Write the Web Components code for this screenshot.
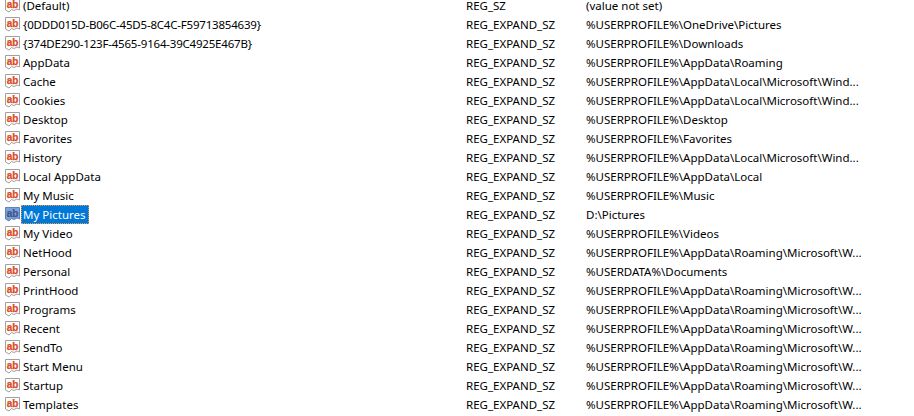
<!DOCTYPE html>
<html>
<head>
<meta charset="utf-8">
<title>Registry values</title>
<style>
  html, body { margin: 0; padding: 0; background: #fff; overflow: hidden; height: 416px; }
</style>
</head>
<body>
<reg-list>
  <reg-row name="(Default)" type="REG_SZ" data="(value not set)"></reg-row>
  <reg-row name="{0DDD015D-B06C-45D5-8C4C-F59713854639}" type="REG_EXPAND_SZ" data="%USERPROFILE%\OneDrive\Pictures"></reg-row>
  <reg-row name="{374DE290-123F-4565-9164-39C4925E467B}" type="REG_EXPAND_SZ" data="%USERPROFILE%\Downloads"></reg-row>
  <reg-row name="AppData" type="REG_EXPAND_SZ" data="%USERPROFILE%\AppData\Roaming"></reg-row>
  <reg-row name="Cache" type="REG_EXPAND_SZ" data="%USERPROFILE%\AppData\Local\Microsoft\Wind..."></reg-row>
  <reg-row name="Cookies" type="REG_EXPAND_SZ" data="%USERPROFILE%\AppData\Local\Microsoft\Wind..."></reg-row>
  <reg-row name="Desktop" type="REG_EXPAND_SZ" data="%USERPROFILE%\Desktop"></reg-row>
  <reg-row name="Favorites" type="REG_EXPAND_SZ" data="%USERPROFILE%\Favorites"></reg-row>
  <reg-row name="History" type="REG_EXPAND_SZ" data="%USERPROFILE%\AppData\Local\Microsoft\Wind..."></reg-row>
  <reg-row name="Local AppData" type="REG_EXPAND_SZ" data="%USERPROFILE%\AppData\Local"></reg-row>
  <reg-row name="My Music" type="REG_EXPAND_SZ" data="%USERPROFILE%\Music"></reg-row>
  <reg-row name="My Pictures" type="REG_EXPAND_SZ" data="D:\Pictures" selected></reg-row>
  <reg-row name="My Video" type="REG_EXPAND_SZ" data="%USERPROFILE%\Videos"></reg-row>
  <reg-row name="NetHood" type="REG_EXPAND_SZ" data="%USERPROFILE%\AppData\Roaming\Microsoft\W..."></reg-row>
  <reg-row name="Personal" type="REG_EXPAND_SZ" data="%USERDATA%\Documents"></reg-row>
  <reg-row name="PrintHood" type="REG_EXPAND_SZ" data="%USERPROFILE%\AppData\Roaming\Microsoft\W..."></reg-row>
  <reg-row name="Programs" type="REG_EXPAND_SZ" data="%USERPROFILE%\AppData\Roaming\Microsoft\W..."></reg-row>
  <reg-row name="Recent" type="REG_EXPAND_SZ" data="%USERPROFILE%\AppData\Roaming\Microsoft\W..."></reg-row>
  <reg-row name="SendTo" type="REG_EXPAND_SZ" data="%USERPROFILE%\AppData\Roaming\Microsoft\W..."></reg-row>
  <reg-row name="Start Menu" type="REG_EXPAND_SZ" data="%USERPROFILE%\AppData\Roaming\Microsoft\W..."></reg-row>
  <reg-row name="Startup" type="REG_EXPAND_SZ" data="%USERPROFILE%\AppData\Roaming\Microsoft\W..."></reg-row>
  <reg-row name="Templates" type="REG_EXPAND_SZ" data="%USERPROFILE%\AppData\Roaming\Microsoft\W..."></reg-row>
</reg-list>
<script>
class RegIcon extends HTMLElement {
  constructor() {
    super();
    this.attachShadow({ mode: 'open' });
  }

  connectedCallback() {
    const selected = this.hasAttribute('selected');
    // selected rows get the blue tint windows puts over list icons
    const page = selected ? '#7ba3dc' : '#ffffff';
    const edge = selected ? '#5f82b8' : '#a0a0a0';
    const ink = selected ? '#46548a' : '#dc4a26';

    this.shadowRoot.innerHTML = `
      <style>
        :host { display: block; width: 17px; height: 17px; }
        svg { display: block; }
        text { font-family: "Liberation Sans", sans-serif; font-size: 10px; font-weight: bold; }
      </style>
      <svg width="17" height="17" viewBox="0 0 17 17">
        <path d="M1.5 1.5H15.5V13L13 12L10 13.5L7.5 12.5L5 15L1.5 13Z" fill="${page}" stroke="${edge}"/>
        <text x="8.6" y="11" text-anchor="middle" fill="${ink}" stroke="${ink}" stroke-width="0.25">ab</text>
      </svg>
    `;
  }
}

class RegRow extends HTMLElement {
  constructor() {
    super();
    this.attachShadow({ mode: 'open' });
  }

  connectedCallback() {
    const selected = this.hasAttribute('selected');
    const name = this.getAttribute('name');
    // the guid names run wide in this font, digits are narrower in the original
    const guid = name.startsWith('{');
    this.shadowRoot.innerHTML = `
      <style>
        :host {
          display: grid;
          grid-template-columns: 466px 120px 1fr;
          height: 19px;
          line-height: 19px;
          font-family: "Noto Sans", sans-serif;
          font-size: 11.5px;
          color: #000;
          white-space: nowrap;
        }
        .name-cell { display: flex; align-items: center; padding-left: 4px; }
        .name {
          padding: 0 3px 0 2px;
          height: 19px;
          box-sizing: border-box;
        }
        .guid { letter-spacing: -0.2px; }
        .sel {
          background: #0078d7;
          color: #fff;
          outline: 1px dotted #f0a040;
          outline-offset: -1px;
        }
      </style>
      <div class="name-cell">
        <reg-icon ${selected ? 'selected' : ''}></reg-icon>
        <span class="name ${selected ? 'sel' : ''} ${guid ? 'guid' : ''}">${name}</span>
      </div>
      <div>${this.getAttribute('type')}</div>
      <div>${this.getAttribute('data')}</div>
    `;
  }
}

class RegList extends HTMLElement {
  constructor() {
    super();
    this.attachShadow({ mode: 'open' });
    this.shadowRoot.innerHTML = `
      <style>
        :host { display: block; margin-top: -4px; width: 914px; }
      </style>
      <slot></slot>
    `;
  }
}

customElements.define('reg-icon', RegIcon);
customElements.define('reg-row', RegRow);
customElements.define('reg-list', RegList);
</script>
</body>
</html>
